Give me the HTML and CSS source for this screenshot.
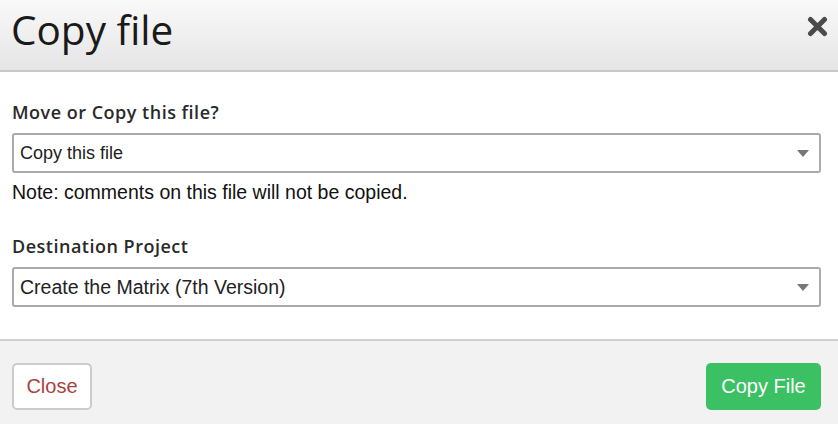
FILE: index.html
```html
<!DOCTYPE html>
<html>
<head>
<meta charset="utf-8">
<link rel="stylesheet" href="styles.css">
</head>
<body>
<div class="modal">
  <div class="modal-header">
    <h1 class="title">Copy file</h1>
    <span class="close-x">
      <svg width="21" height="21" viewBox="0 0 21 21"><path d="M3.5 3.5 L17.5 17.5 M17.5 3.5 L3.5 17.5" stroke="#4a4a4a" stroke-width="5" stroke-linecap="round"/></svg>
    </span>
  </div>
  <div class="modal-body">
    <label class="label">Move or Copy this file?</label>
    <div class="select"><span class="narrow">Copy this file</span><span class="caret"></span></div>
    <div class="note">Note: comments on this file will not be copied.</div>
    <label class="label second">Destination Project</label>
    <div class="select"><span>Create the Matrix (7th Version)</span><span class="caret"></span></div>
  </div>
  <div class="modal-footer">
    <button class="btn btn-close">Close</button>
    <button class="btn btn-copy">Copy File</button>
  </div>
</div>
</body>
</html>
```

FILE: styles.css
```css
html, body {
  margin: 0;
  padding: 0;
  background: #ffffff;
}
.modal {
  width: 838px;
  height: 424px;
  display: flex;
  flex-direction: column;
  font-family: "Liberation Sans", Arial, sans-serif;
  color: #222;
}
.modal-header {
  height: 72px;
  box-sizing: border-box;
  background: linear-gradient(#f9f9f9, #e5e5e5);
  border-bottom: 2px solid #c8c8c8;
  display: flex;
  align-items: flex-start;
  justify-content: space-between;
  padding: 0 10px 0 11px;
  flex: none;
}
.title {
  margin: 0;
  font-family: "Open Sans", "Liberation Sans", sans-serif;
  font-weight: 400;
  font-size: 40.5px;
  color: #1a1a1a;
  line-height: 40px;
  padding-top: 10px;
}
.close-x {
  display: flex;
  padding-top: 16px;
}
.modal-body {
  flex: 1;
  padding: 29px 17px 0 12px;
  display: flex;
  flex-direction: column;
}
.label {
  display: block;
  font-family: "Open Sans", "Liberation Sans", sans-serif;
  font-weight: 600;
  font-size: 18px;
  letter-spacing: 0.5px;
  color: #2a2a2a;
  line-height: 22px;
  margin-bottom: 10px;
}
.label.second {
  margin-top: 32px;
}
.select {
  height: 40px;
  box-sizing: border-box;
  border: 2px solid #aaaaaa;
  border-radius: 3px;
  display: flex;
  align-items: center;
  justify-content: space-between;
  padding: 0 10px 0 6px;
  font-size: 19.5px;
  color: #222;
}
.narrow {
  font-size: 18px;
}
.caret {
  width: 0;
  height: 0;
  border-left: 6px solid transparent;
  border-right: 6px solid transparent;
  border-top: 7px solid #777;
}
.note {
  font-size: 19.5px;
  color: #111;
  margin-top: 8px;
  line-height: 22px;
}
.modal-footer {
  height: 85px;
  box-sizing: border-box;
  flex: none;
  background: #f2f2f2;
  border-top: 2px solid #d0d0d0;
  display: flex;
  align-items: flex-start;
  justify-content: space-between;
  padding: 22px 17px 0 12px;
}
.btn {
  height: 47px;
  box-sizing: border-box;
  border-radius: 5px;
  font-family: "Liberation Sans", Arial, sans-serif;
  font-size: 20px;
  cursor: pointer;
}
.btn-close {
  background: #fff;
  border: 2px solid #cccccc;
  color: #a9433f;
  padding: 0;
  width: 80px;
}
.btn-copy {
  background: #3cc064;
  border: none;
  color: #fff;
  width: 115px;
  padding: 0;
}
```
